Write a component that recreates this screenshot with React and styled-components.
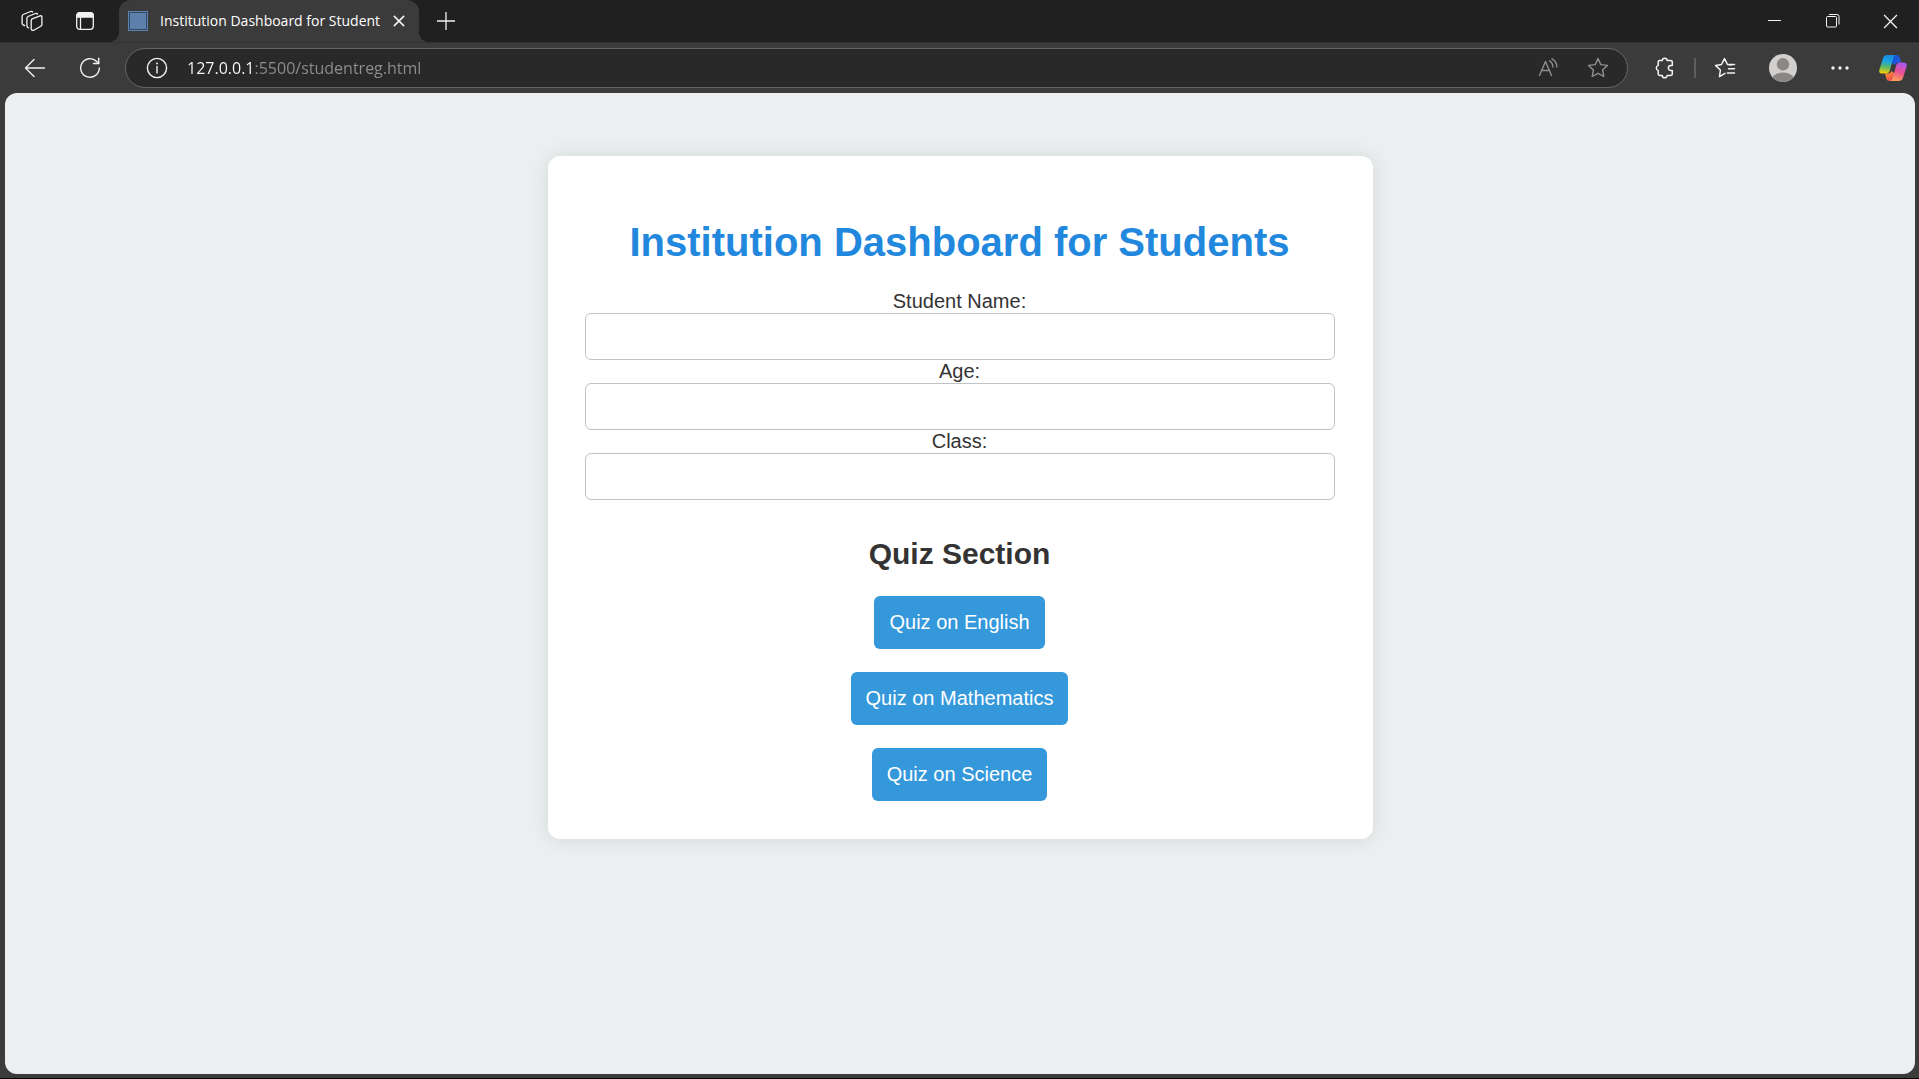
import React from "react";
import styled, { createGlobalStyle, css } from "styled-components";

const UI_FONT = '"Segoe UI", "Open Sans", "Noto Sans", sans-serif';
const PAGE_FONT = 'Arial, "Liberation Sans", sans-serif';

const GlobalStyle = createGlobalStyle`
  *, *::before, *::after { box-sizing: border-box; }
  body { margin: 0; background: #3b3b3b; }
`;

const Window = styled.div`
  display: flex;
  flex-direction: column;
  min-height: 100vh;
  background: #3b3b3b;
  border-bottom: 1px solid #000;
`;

const TitleBar = styled.header`
  display: flex;
  height: 42px;
  padding-left: 5px;
  background: #202020;
  font-family: ${UI_FONT};
`;

const IconButton = styled.button`
  display: flex;
  flex: none;
  align-items: center;
  justify-content: center;
  width: ${(p) => p.$width}px;
  padding: 0;
  border: 0;
  background: none;
  color: ${(p) => (p.$dim ? "#8f8f8f" : "#f2f2f2")};
  svg { display: block; fill: none; stroke: currentColor; }
`;

const flare = css`
  content: "";
  position: absolute;
  bottom: 0;
  width: 10px;
  height: 10px;
`;

const Tab = styled.div`
  position: relative;
  display: flex;
  align-items: center;
  width: 300px;
  margin-left: 8px;
  padding: 0 9px;
  border-radius: 12px 12px 0 0;
  background: #3b3b3b;
  color: #fff;
  &::before {
    ${flare}
    right: 100%;
    background: radial-gradient(circle at 0 0, transparent 10px, #3b3b3b 10px);
  }
  &::after {
    ${flare}
    left: 100%;
    background: radial-gradient(circle at 100% 0, transparent 10px, #3b3b3b 10px);
  }
`;

const Favicon = styled.span`
  flex: none;
  width: 20px;
  height: 20px;
  border: 1px solid #5b84b5;
  background: #5c80ab;
  box-shadow: inset 0 0 0 1px #33475f;
`;

const TabTitle = styled.span`
  flex: 1;
  margin-left: 12px;
  overflow: hidden;
  font-size: 14px;
  line-height: 20px;
  white-space: nowrap;
`;

const WindowControls = styled.div`
  display: flex;
  margin-left: auto;
`;

const Toolbar = styled.nav`
  display: flex;
  height: 51px;
  padding: 0 3px 0 7px;
  border-top: 1px solid #333;
  font-family: ${UI_FONT};
`;

const AddressBar = styled.div`
  display: flex;
  flex: 1;
  align-items: stretch;
  height: 40px;
  margin: 5px 8px 0;
  padding: 0 4px 0 6px;
  border: 1px solid #666;
  border-radius: 20px;
  background: #292929;
`;

const Address = styled.input`
  flex: 1;
  min-width: 0;
  margin-left: 5px;
  padding: 0;
  border: 0;
  outline: 0;
  color: #8f8f8f;
  background: linear-gradient(90deg, #fff 68px, #8f8f8f 68px);
  background-clip: text;
  -webkit-text-fill-color: transparent;
  font-family: inherit;
  font-size: 16px;
  line-height: 24px;
`;

const Divider = styled.span`
  width: 2px;
  height: 20px;
  margin-top: 15px;
  background: #5e5e5e;
`;

const Viewport = styled.main`
  flex: 1;
  margin: 0 4px 4px 5px;
  padding: 63px 20px;
  border-radius: 12px;
  background: #ebeff0;
  color: #333;
  font-family: ${PAGE_FONT};
`;

const Card = styled.section`
  max-width: 825px;
  margin: 0 auto;
  padding: 63px 38px 38px 37px;
  border-radius: 12px;
  background: #fff;
  box-shadow: 0 0 20px rgba(0, 0, 0, 0.1);
  text-align: center;
`;

const Heading = styled.h1`
  margin: 0 0 25px;
  color: #2288dd;
  font-size: 40px;
  line-height: 46px;
`;

const Label = styled.label`
  display: block;
  font-size: 20px;
  line-height: 23px;
`;

const Field = styled.input`
  display: block;
  width: 100%;
  height: 47px;
  padding: 0 12px;
  border: 1px solid #bdc3c7;
  border-radius: 6px;
  background: #fff;
  font: inherit;
`;

const SubHeading = styled.h2`
  margin: 36px 0 25px;
  font-size: 30px;
  line-height: 35px;
`;

const QuizList = styled.div`
  display: flex;
  flex-direction: column;
  align-items: center;
  gap: 23px;
`;

const QuizLink = styled.a`
  padding: 15px;
  border-radius: 6px;
  background: #3498db;
  color: #fff;
  font-size: 20px;
  line-height: 23px;
  text-decoration: none;
`;

const WorkspacesIcon = () => (
  <svg width="22" height="22" viewBox="0 0 22 22" strokeWidth="1.3" strokeLinejoin="round" strokeLinecap="round">
    <path d="M11.200 8.800 19 5.900q1.900-.6 1.900 1.200v7.400q0 1.200-1.100 1.700l-7 4q-2 .7-2.600-1V10.500q0-1.200 1-1.700z" />
    <path d="M7.600 17.800q-1.700-.3-1.700-2.200V8.200q0-1.200 1.100-1.700l7.400-3q1.700-.5 2.100.7" />
    <path d="M3.600 15.500Q1.100 15 1.100 13V6.200q0-1.200 1.100-1.700L9.600 1.500q1.500-.5 2 .5" />
  </svg>
);

const TabActionsIcon = () => (
  <svg width="18" height="18" viewBox="0 0 18 18" strokeWidth="1.3">
    <rect x="0.7" y="0.7" width="16.6" height="16.6" rx="3" />
    <path d="M1 5V3.4Q1 1 3.4 1h11.2Q17 1 17 3.400V5z" fill="currentColor" />
    <path d="M4.500 5v12" />
  </svg>
);

const CloseIcon = ({ size, stroke }) => (
  <svg width={size} height={size} viewBox="0 0 14 14" strokeWidth={stroke}>
    <path d="M1 1l12 12M13 1 1 13" />
  </svg>
);

const PlusIcon = () => (
  <svg width="18" height="18" viewBox="0 0 18 18" strokeWidth="1.3">
    <path d="M9 0v18M0 9h18" />
  </svg>
);

const MinimizeIcon = () => (
  <svg width="14" height="14" viewBox="0 0 14 14">
    <path d="M1 6.500h13" />
  </svg>
);

const RestoreIcon = () => (
  <svg width="16" height="14" viewBox="0 0 16 14">
    <rect x="2.500" y="2.500" width="10" height="10.500" rx="1" />
    <path d="M5 .5h8q2 0 2 2v8" />
  </svg>
);

const BackIcon = () => (
  <svg width="22" height="20" viewBox="0 0 22 20" strokeWidth="1.4" strokeLinecap="round" strokeLinejoin="round">
    <path d="M20.500 10H1.500M10 1.500 1.500 10l8.500 8.500" />
  </svg>
);

const RefreshIcon = () => (
  <svg width="22" height="22" viewBox="0 0 22 22" strokeWidth="1.4" strokeLinecap="round" strokeLinejoin="round">
    <path d="M20.300 11a9.300 9.300 0 1 1-2.600-6.500L19.600 6.400" />
    <path d="M19.700 1.300v5.200h-5.200" />
  </svg>
);

const InfoIcon = () => (
  <svg width="22" height="22" viewBox="0 0 22 22" strokeWidth="1.4">
    <circle cx="11" cy="11" r="9.600" />
    <path d="M11 9.500v6.500" strokeLinecap="round" />
    <circle cx="11" cy="6.600" r="1" fill="currentColor" stroke="none" />
  </svg>
);

const ReadAloudIcon = () => (
  <svg width="20" height="20" viewBox="0 0 20 20" strokeWidth="1.400" strokeLinecap="round" strokeLinejoin="round">
    <path d="M1.500 17.500 7.500 3.500l6 14M3.800 12.500h7.400M11.500 2.800q3.300 2 3.400 6.200M14 .9q4.600 2.600 4.900 8.100" />
  </svg>
);

const StarIcon = () => (
  <svg width="22" height="22" viewBox="0 0 22 22" strokeWidth="1.400" strokeLinejoin="round">
    <path d="m11 1.600 2.800 6 6.600.8-4.800 4.600 1.200 6.500L11 16.300l-5.800 3.200L6.400 13 1.600 8.400l6.600-.8z" />
  </svg>
);

const ExtensionIcon = () => (
  <svg width="20" height="22" viewBox="0 0 20 22" strokeWidth="1.500" strokeLinejoin="round">
    <path d="M4.500 3.600H7.300a2.400 2.400 0 0 1 4.800 0h3.400q1.800 0 1.800 1.700v3.100h-1.400a2.500 2.500 0 0 0 0 5h1.400v3.300q0 1.700-1.800 1.700h-3.400a2.400 2.400 0 0 1-4.800 0H4.900q-1.700 0-1.700-1.700v-3.300a2.600 2.600 0 0 1 0-5V5q0-1.400 1.300-1.400z" />
  </svg>
);

const FavoritesIcon = () => (
  <svg width="22" height="22" viewBox="0 0 22 22" strokeWidth="1.500" strokeLinejoin="round" strokeLinecap="round">
    <path d="m11 16.300-5.500 3.300L6.400 13 1.500 8.400l6-.9L10.500 1.600l3 5.900 3.500.6M14.500 7.500h6M14.500 11.800h6M13.500 16h7" />
  </svg>
);

const AvatarIcon = () => (
  <svg width="28" height="28" viewBox="0 0 28 28">
    <clipPath id="avatar-clip">
      <circle cx="14" cy="14" r="14" />
    </clipPath>
    <g clipPath="url(#avatar-clip)" stroke="none">
      <rect width="28" height="28" fill="#d2d0ce" />
      <circle cx="14" cy="10.300" r="6.200" fill="#8a8886" />
      <ellipse cx="14" cy="26" rx="11.500" ry="7.600" fill="#8a8886" />
    </g>
  </svg>
);

const MoreIcon = () => (
  <svg width="20" height="4" viewBox="0 0 20 4">
    <g fill="currentColor" stroke="none">
      <circle cx="2" cy="2" r="1.700" />
      <circle cx="9" cy="2" r="1.700" />
      <circle cx="16" cy="2" r="1.700" />
    </g>
  </svg>
);

const CopilotIcon = () => (
  <svg width="28" height="26" viewBox="0 0 28 26">
    <defs>
      <linearGradient id="cp-left" x1="0.500" y1="0" x2="0.400" y2="1">
        <stop offset="0" stopColor="#168be0" />
        <stop offset="0.350" stopColor="#1ba5e0" />
        <stop offset="0.650" stopColor="#5cb865" />
        <stop offset="1" stopColor="#f8cf08" />
      </linearGradient>
      <linearGradient id="cp-right" x1="0.700" y1="0" x2="0.400" y2="1">
        <stop offset="0" stopColor="#a457f5" />
        <stop offset="0.500" stopColor="#ec4f93" />
        <stop offset="1" stopColor="#ffa055" />
      </linearGradient>
      <linearGradient id="cp-top" x1="0" y1="0" x2="1" y2="1">
        <stop offset="0" stopColor="#1646c8" />
        <stop offset="1" stopColor="#2465ee" />
      </linearGradient>
      <linearGradient id="cp-bottom" x1="0" y1="0" x2="0.600" y2="1">
        <stop offset="0" stopColor="#f8a21b" />
        <stop offset="1" stopColor="#f0475f" />
      </linearGradient>
    </defs>
    <g stroke="none">
      <path d="M12 0h5.500q2.500 0 3.200 2.400L22 7.500h-3q-2.500 0-3.300 2.500L13 8z" fill="url(#cp-top)" />
      <path d="M16 26h-5.500q-2.500 0-3.200-2.500L6 18.500h3q2.500 0 3.300-2.500L15 18z" fill="url(#cp-bottom)" />
      <path d="M8.500 0H17q-2 .4-2.700 3l-3.500 12.500q-.8 3-3.600 3H3.500Q-.6 18.500.4 14.500L4 3.300Q5 0 8.500 0z" fill="url(#cp-left)" />
      <path d="M19.500 26H11q2-.4 2.700-3l3.500-12.500q.8-3 3.600-3h3.700q4.100 0 3.100 4L24 22.700q-1 3.300-4.500 3.300z" fill="url(#cp-right)" />
    </g>
  </svg>
);

const fields = [
  { id: "name", label: "Student Name:", type: "text" },
  { id: "age", label: "Age:", type: "text" },
  { id: "class", label: "Class:", type: "text" },
];

const quizzes = ["English", "Mathematics", "Science"];

export default function App() {
  return (
    <Window>
      <GlobalStyle />
      <TitleBar>
        <IconButton $width={53} aria-label="Workspaces"><WorkspacesIcon /></IconButton>
        <IconButton $width={53} aria-label="Tab actions"><TabActionsIcon /></IconButton>
        <Tab>
          <Favicon />
          <TabTitle>Institution Dashboard for Student</TabTitle>
          <IconButton $width={22} aria-label="Close tab"><CloseIcon size={12} stroke={1.8} /></IconButton>
        </Tab>
        <IconButton $width={53} aria-label="New tab"><PlusIcon /></IconButton>
        <WindowControls>
          <IconButton $width={58} aria-label="Minimize"><MinimizeIcon /></IconButton>
          <IconButton $width={58} aria-label="Restore"><RestoreIcon /></IconButton>
          <IconButton $width={58} aria-label="Close"><CloseIcon size={15} stroke={1.2} /></IconButton>
        </WindowControls>
      </TitleBar>
      <Toolbar>
        <IconButton $width={55} aria-label="Back"><BackIcon /></IconButton>
        <IconButton $width={55} aria-label="Refresh"><RefreshIcon /></IconButton>
        <AddressBar>
          <IconButton $width={50} aria-label="Site information"><InfoIcon /></IconButton>
          <Address aria-label="Address" defaultValue="127.0.0.1:5500/studentreg.html" spellCheck={false} />
          <IconButton $width={50} $dim aria-label="Read aloud"><ReadAloudIcon /></IconButton>
          <IconButton $width={50} $dim aria-label="Add to favorites"><StarIcon /></IconButton>
        </AddressBar>
        <IconButton $width={58} aria-label="Extensions"><ExtensionIcon /></IconButton>
        <Divider />
        <IconButton $width={58} aria-label="Favorites"><FavoritesIcon /></IconButton>
        <IconButton $width={58} aria-label="Profile"><AvatarIcon /></IconButton>
        <IconButton $width={58} aria-label="More"><MoreIcon /></IconButton>
        <IconButton $width={46} aria-label="Copilot"><CopilotIcon /></IconButton>
      </Toolbar>
      <Viewport>
        <Card>
          <Heading>Institution Dashboard for Students</Heading>
          <form>
            {fields.map((f) => (
              <React.Fragment key={f.id}>
                <Label htmlFor={f.id}>{f.label}</Label>
                <Field id={f.id} name={f.id} type={f.type} />
              </React.Fragment>
            ))}
          </form>
          <SubHeading>Quiz Section</SubHeading>
          <QuizList>
            {quizzes.map((q) => (
              <QuizLink key={q} href={"#" + q.toLowerCase()}>{"Quiz on " + q}</QuizLink>
            ))}
          </QuizList>
        </Card>
      </Viewport>
    </Window>
  );
}
